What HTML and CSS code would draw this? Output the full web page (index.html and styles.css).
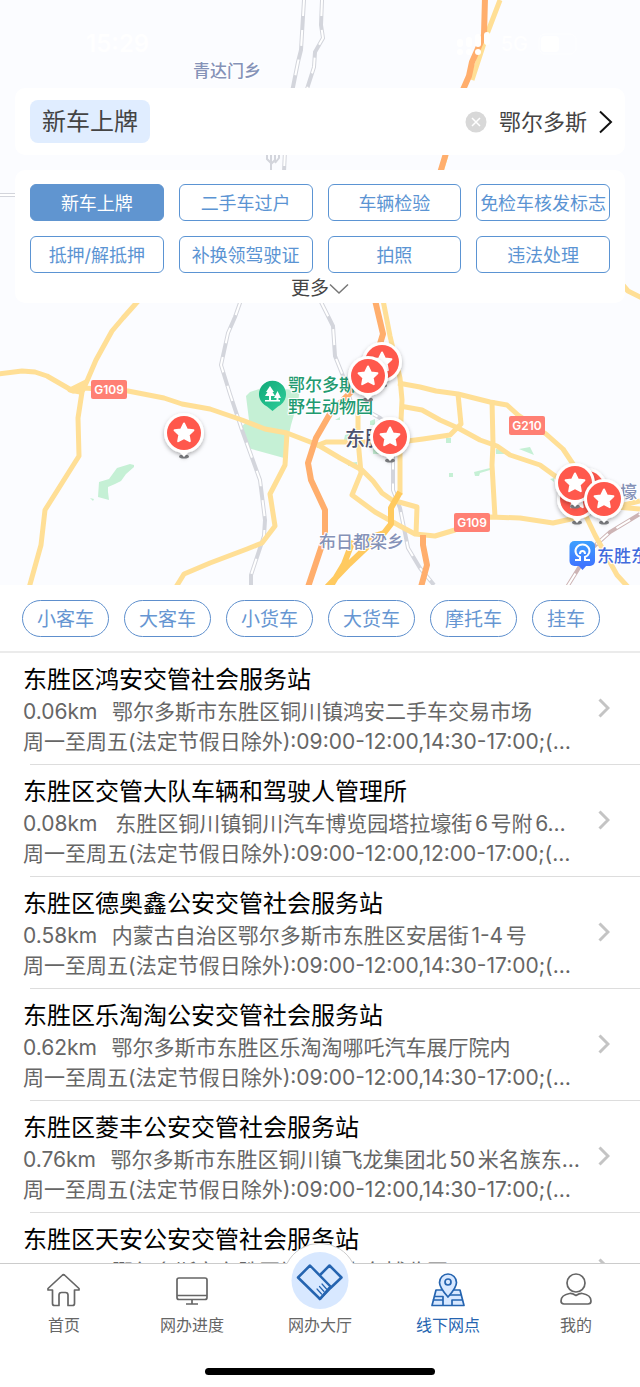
FILE: index.html
```html
<!DOCTYPE html>
<html lang="zh-CN">
<head>
<meta charset="utf-8">
<meta name="viewport" content="width=device-width, initial-scale=1">
<title>线下网点</title>
<link rel="stylesheet" href="styles.css">
</head>
<body>
<div class="app">
  <section class="map">
    <svg class="map-canvas" viewBox="0 0 640 585" preserveAspectRatio="xMidYMin slice" aria-label="地图">
      <defs>
        <filter id="soft" x="-50%" y="-50%" width="200%" height="200%">
          <feDropShadow dx="0" dy="2" stdDeviation="2" flood-color="#000" flood-opacity=".3"/>
        </filter>
        <linearGradient id="metro" x1="0" y1="0" x2="0" y2="1">
          <stop offset="0" stop-color="#3ea0ff"/><stop offset="1" stop-color="#3f74ff"/>
        </linearGradient>
        <linearGradient id="leaf" x1="0" y1="0" x2="1" y2="1">
          <stop offset="0" stop-color="#10a878"/><stop offset="1" stop-color="#31cf9b"/>
        </linearGradient>
        <g id="pin">
          <ellipse cx="0" cy="23.500" rx="5" ry="2" fill="#85878b"/>
          <path filter="url(#soft)" fill="#fff" d="M0 24L-4 19.6A20 20 0 1 1 4 19.6Z"/>
          <circle r="17" fill="#ff584c"/>
          <path fill="#fff" stroke="#fff" stroke-width="2" stroke-linejoin="round" d="M0-9.5L2.9-3.6L9.4-2.8L4.7 1.8L5.8 8.2L0 5.2L-5.8 8.2L-4.7 1.8L-9.4-2.8L-2.9-3.6Z"/>
        </g>
      </defs>

      <g class="green">
        <path d="M246 396L250 392L262 388L300 390L298 401L291 425L284 458L248 448L242 426L249 420Z"/>
        <path d="M130 464L134 465L134 467L126 474L121 481L115 484L108 487V492L109 500L98 497L99 482L109 479L117 468Z"/>
        <path d="M90 498L94 499L93 501Z"/>
        <path d="M519 449L530 447L534 455L524 451ZM496 449L505 450L507 454H496ZM446 438H451V443H446ZM449 473H453V477H449ZM474 472L490 468V470L480 473L479 476H475ZM348 463L357 462V466H348ZM370 421L375 419V425H370ZM373 447H382V454H373ZM335 420L340 417V420ZM345 435L349 434V441L344 440ZM550 479L554 478V482Z"/>
      </g>

      <g class="rail">
        <path d="M304 0L301 50L298 62L292 92M322 0L321 25L323 38L315 52L314 67L306 92M285 150L284 172M0 195H20"/>
        <path d="M241 300L235 317L228 333L221 365L230 394L242 430L260 480L265 520L264 536L251 575V586M321 302L333 326L335 356L345 381L351 402L380 418L393 430V490L400 508L408 548L420 568L434 585"/>
      </g>
      <g class="rail-dash">
        <path d="M304 0L301 50L298 62L292 92M322 0L321 25L323 38L315 52L314 67L306 92M285 150L284 172M0 195H20"/>
        <path d="M241 300L235 317L228 333L221 365L230 394L242 430L260 480L265 520L264 536L251 575V586M321 302L333 326L335 356L345 381L351 402L380 418L393 430V490L400 508L408 548L420 568L434 585"/>
      </g>
      <path fill="none" stroke="#d3d5dc" stroke-width="2" d="M267 152V159L271 163V172M271 152V163M275 152V160L271 164M279 152V158L275 163"/>
      <path class="rail-pink" d="M567 587L590 550L610 532L640 514"/>
      <path class="rail-pink-dash" d="M567 587L590 550L610 532L640 514"/>

      <g class="road">
        <path d="M139 300L123 318L112 331L96 360L87 381L82 392L78 418L79 456L45 510L41 545L29 588"/>
        <path d="M-2 374L22 371L35 372L47 376L73 391L84 388L128 391L164 398L182 404L210 409L242 420L265 429L287 433L318 445L340 458L362 470L373 481L382 493L392 500L417 507L416 535"/>
        <path d="M70 390L86 382L80 392Z"/>
        <path d="M176 587L184 574L210 563L247 549L262 543L275 526L270 494L285 465L287 433"/>
        <path d="M383 300L390 336L400 378L402 400L400 441V495"/>
        <path d="M358 412V440L361 473L352 495L375 512L400 526L415 534L435 536L455 530L490 517L520 518L553 523L580 517"/>
        <path d="M398 383L420 387L436 391L458 394L490 402L507 405L518 415L546 434L563 449L577 470"/>
        <path d="M400 406L422 410L440 420L458 428L480 440L497 446L510 455L540 465L562 481"/>
        <path d="M316 446L326 442H400L423 439L450 435L461 424L458 394M492 400L493 444L492 465L495 517"/>
        <path d="M583 510L595 535L617 575L628 587M616 507L640 501M616 507L640 509M622 284L628 291L642 298M500 0L487 34L472 80M446 155L441 172"/>
      </g>
      <path class="road-main" d="M400 492L391 508V524L384 533L368 546L349 564L327 587M384 533L352 543L344 564L332 584"/>
      <path class="highway" d="M485-2L484 35L472 62L469 76L462 92M447 150L440 173M375 300L383 334L372 370L348 395L331 412L316 438L308 463L311 480L325 510V536L308 587M423 535V545L427 565L421 587"/>

      <g class="shield">
        <rect x="91" y="380" width="36" height="19" rx="2"/><text x="109" y="394">G109</text>
        <rect x="509" y="416" width="36" height="19" rx="2"/><text x="527" y="430">G210</text>
        <rect x="454" y="513" width="36" height="19" rx="2"/><text x="472" y="527">G109</text>
      </g>

      <path fill="url(#leaf)" d="M272.500 411L267 406.500A13.500 13.500 0 1 1 278 406.500Z"/>
      <path fill="#fff" d="M270 386L274 392H272.500L275 396H271V400H269V396H265L267.500 392H266ZM277.500 391L281 398H278.500V400H276.500V398H274ZM265 400H280V401.500H265Z"/>

      <rect x="569.500" y="541" width="25.500" height="25" rx="5" fill="url(#metro)"/>
      <path d="M578 565L582.500 570L587 565Z" fill="#3f74ff"/>
      <path fill="none" stroke="#fff" stroke-width="2" d="M575 560H580V557A7 6.500 0 1 1 585 557V560H590M580 554Q580 551 582.500 551T585 554"/>

      <g class="place">
        <text x="193" y="77">青达门乡</text>
        <text x="319" y="548">布日都梁乡</text>
        <text x="620" y="498">壕</text>
      </g>
      <g class="place park">
        <text x="288" y="391">鄂尔多斯市</text>
        <text x="288" y="413">野生动物园</text>
      </g>
      <text class="place city-name" x="345" y="446">东胜区</text>
      <text class="place station" x="597" y="562">东胜东</text>

      <use href="#pin" x="184" y="433"/>
      <use href="#pin" x="382" y="362"/>
      <use href="#pin" x="368" y="376"/>
      <use href="#pin" x="390" y="437"/>
      <use href="#pin" x="587" y="488"/>
      <use href="#pin" x="577" y="499"/>
      <use href="#pin" x="575" y="483"/>
      <use href="#pin" x="604" y="499"/>
    </svg>

    <div class="overlay">
      <header class="status">
        <span>15:29</span>
        <span class="status-right">
          <svg width="34" height="24" viewBox="0 0 34 24" fill="#fff"><rect y="7" width="6" height="8" rx="3"/><rect x="9" y="5" width="6" height="10" rx="3"/><rect x="18" y="2" width="6" height="13" rx="3"/><rect x="27" width="6" height="13" rx="3"/><circle cx="3" cy="20" r="3"/><circle cx="12" cy="20" r="3"/><circle cx="21" cy="20" r="3"/></svg>
          <span class="network">5G</span>
          <svg width="42" height="22" viewBox="0 0 42 22"><rect x="1" y="1" width="37" height="20" rx="6" fill="none" stroke="#fff" stroke-opacity=".6"/><rect x="3" y="3" width="18" height="16" rx="4" fill="#fff"/></svg>
        </span>
      </header>

      <div class="search card">
        <span class="tag">新车上牌</span>
        <button class="clear" type="button" aria-label="清除">
          <svg width="22" height="22" viewBox="0 0 22 22"><circle cx="11" cy="11" r="10.500" fill="#d8d8d8"/><path d="M7 7L15 15M15 7L7 15" stroke="#fff" stroke-width="1.500"/></svg>
        </button>
        <button class="city" type="button"><span class="city-label">鄂尔多斯</span>
          <svg width="14" height="24" viewBox="0 0 14 24"><path d="M1 1.500L12 12L1 22.500" fill="none" stroke="#111" stroke-width="2"/></svg>
        </button>
      </div>

      <div class="services card">
        <div class="service-grid">
          <button type="button" class="service active">新车上牌</button>
          <button type="button" class="service">二手车过户</button>
          <button type="button" class="service">车辆检验</button>
          <button type="button" class="service">免检车核发标志</button>
          <button type="button" class="service">抵押/解抵押</button>
          <button type="button" class="service">补换领驾驶证</button>
          <button type="button" class="service">拍照</button>
          <button type="button" class="service">违法处理</button>
        </div>
        <button type="button" class="more">更多<svg width="20" height="12" viewBox="0 0 20 12"><path d="M1 1.500L10 10L19 1.500" fill="none" stroke="#777" stroke-width="1.500"/></svg></button>
      </div>
    </div>
  </section>

  <div class="chips">
    <button type="button" class="chip">小客车</button>
    <button type="button" class="chip">大客车</button>
    <button type="button" class="chip">小货车</button>
    <button type="button" class="chip">大货车</button>
    <button type="button" class="chip">摩托车</button>
    <button type="button" class="chip">挂车</button>
  </div>

  <main class="list">
    <a class="row" href="#s1">
      <h2 class="name">东胜区鸿安交管社会服务站</h2>
      <p class="line"><span class="distance">0.06km</span>鄂尔多斯市东胜区铜川镇鸿安二手车交易市场</p>
      <p class="line">周一至周五(法定节假日除外):09:00-12:00,14:30-17:00;(…</p>
      <svg class="arrow" viewBox="0 0 12 20"><path d="M1.500 1.500L10 10L1.500 18.500"/></svg>
    </a>
    <a class="row" href="#s2">
      <h2 class="name">东胜区交管大队车辆和驾驶人管理所</h2>
      <p class="line"><span class="distance">0.08km</span>&nbsp;东胜区铜川镇铜川汽车博览园塔拉壕街6号附6…</p>
      <p class="line">周一至周五(法定节假日除外):09:00-12:00,12:00-17:00;(…</p>
      <svg class="arrow" viewBox="0 0 12 20"><path d="M1.500 1.500L10 10L1.500 18.500"/></svg>
    </a>
    <a class="row" href="#s3">
      <h2 class="name">东胜区德奥鑫公安交管社会服务站</h2>
      <p class="line"><span class="distance">0.58km</span>内蒙古自治区鄂尔多斯市东胜区安居街1-4号</p>
      <p class="line">周一至周五(法定节假日除外):09:00-12:00,14:30-17:00;(…</p>
      <svg class="arrow" viewBox="0 0 12 20"><path d="M1.500 1.500L10 10L1.500 18.500"/></svg>
    </a>
    <a class="row" href="#s4">
      <h2 class="name">东胜区乐淘淘公安交管社会服务站</h2>
      <p class="line"><span class="distance">0.62km</span>鄂尔多斯市东胜区乐淘淘哪吒汽车展厅院内</p>
      <p class="line">周一至周五(法定节假日除外):09:00-12:00,14:30-17:00;(…</p>
      <svg class="arrow" viewBox="0 0 12 20"><path d="M1.500 1.500L10 10L1.500 18.500"/></svg>
    </a>
    <a class="row" href="#s5">
      <h2 class="name">东胜区菱丰公安交管社会服务站</h2>
      <p class="line"><span class="distance">0.76km</span>鄂尔多斯市东胜区铜川镇飞龙集团北50米名族东…</p>
      <p class="line">周一至周五(法定节假日除外):09:00-12:00,14:30-17:00;(…</p>
      <svg class="arrow" viewBox="0 0 12 20"><path d="M1.500 1.500L10 10L1.500 18.500"/></svg>
    </a>
    <a class="row" href="#s6">
      <h2 class="name">东胜区天安公安交管社会服务站</h2>
      <p class="line"><span class="distance">0.80km</span>鄂尔多斯市东胜区铜川镇汽车博览园</p>
      <svg class="arrow" viewBox="0 0 12 20"><path d="M1.500 1.500L10 10L1.500 18.500"/></svg>
    </a>
  </main>

  <nav class="tabbar">
    <div class="tabs">
      <a class="tab" href="#home">
        <svg class="icon" viewBox="0 0 34 34"><path d="M15 2.500Q16.500 1 18 2.500L32 15.500V17H27.500V30.500Q27.500 32.500 25.500 32.500H21V22Q21 19.500 18.500 19.500H14.500Q12 19.500 12 22V32.500H7.500Q5.500 32.500 5.500 30.500V17H1V15.500Z"/></svg>
        首页
      </a>
      <a class="tab" href="#progress">
        <svg class="icon" viewBox="0 0 34 34"><rect x="2" y="5" width="30" height="21.500" rx="2"/><path d="M2 22.500H32M17 26.500V31M11 31H23"/></svg>
        网办进度
      </a>
      <a class="tab" href="#hall">
        <svg class="hall" viewBox="0 0 76 76">
          <path d="M5 20.500A37 37 0 0 1 71 20.500V70H5Z" fill="#fff"/>
          <path d="M5 20.500A37 37 0 0 1 71 20.500" fill="none" stroke="#ccc"/>
          <circle cx="38" cy="37.500" r="28.500" fill="#d8e8ff"/>
          <g fill="none" stroke="#2564b0" stroke-width="2.500" stroke-linejoin="round" stroke-linecap="round">
            <path d="M28 22.500L16 34.500L38 56L48.500 43.500Z"/>
            <path d="M38.500 31.500L47.500 22.500L59.500 34.500L48.500 45L38 56"/>
            <path stroke-width="1.200" d="M35 46L39.500 51M37.500 43.500L42 48.500M40 41L44.500 46"/>
          </g>
        </svg>
        网办大厅
      </a>
      <a class="tab current" href="#offices">
        <svg class="icon" viewBox="0 0 34 34"><path fill="#d8e8ff" d="M5 17H29L33 32.500H1ZM4 23.500H12V32M12 27H1.500M21 32V27H32M19 22H30"/><path fill="#d8e8ff" d="M17 24Q8.500 14.500 8.500 9.500A8.500 8.500 0 0 1 25.500 9.500Q25.500 14.500 17 24Z"/><circle cx="17" cy="9" r="3"/></svg>
        线下网点
      </a>
      <a class="tab" href="#me">
        <svg class="icon" viewBox="0 0 34 34"><circle cx="17" cy="10" r="9"/><path d="M10.500 20.500Q13 20 17 22.500Q21 20 23.500 20.500Q32 22 32 28Q32 31 29 31H5Q2 31 2 28Q2 22 10.500 20.500Z"/></svg>
        我的
      </a>
    </div>
    <div class="home-bar"></div>
  </nav>
</div>
</body>
</html>
```

FILE: styles.css
```css
* {
  box-sizing: border-box;
}

body {
  margin: 0;
  background: #fff;
  color: #444;
  font-family: Inter, "Noto Sans CJK SC", sans-serif;
  text-autospace: normal;
}

button {
  margin: 0;
  padding: 0;
  border: 0;
  background: none;
  color: inherit;
  font: inherit;
  white-space: nowrap;
  cursor: pointer;
}

a {
  color: inherit;
  text-decoration: none;
}

.app {
  display: flex;
  flex-direction: column;
  height: 100vh;
}

/* Map */
.map {
  position: relative;
  flex: none;
  aspect-ratio: 640 / 585;
  overflow: hidden;
  background: #fbfcff;
}

.map-canvas {
  position: absolute;
  inset: 0;
  width: 100%;
  height: 100%;
}

.green { fill: #c5f0d5; }
.rail, .rail-dash, .rail-pink, .rail-pink-dash, .road, .road-main, .highway { fill: none; }
.rail { stroke: #d3d5dc; stroke-width: 4; }
.rail-dash { stroke: #fff; stroke-width: 2; stroke-dasharray: 16 14; }
.rail-pink { stroke: #cdb4b5; stroke-width: 4; }
.rail-pink-dash { stroke: #fff; stroke-width: 2; stroke-dasharray: 16 10; }
.road { stroke: #ffdf96; stroke-width: 5; stroke-linejoin: round; }
.road-main { stroke: #ffca60; stroke-width: 6; stroke-linejoin: round; }
.highway { stroke: #ffae6d; stroke-width: 6; stroke-linejoin: round; }

.shield rect { fill: #ff8074; }
.shield text {
  fill: #fff;
  font-size: 12px;
  font-weight: 600;
  text-anchor: middle;
}

.place {
  fill: #8592b8;
  stroke: #fff;
  stroke-width: 2px;
  paint-order: stroke;
  font-family: "Noto Sans CJK SC", sans-serif;
  font-size: 17px;
  font-weight: 500;
}
.park { fill: #229a70; }
.city-name { fill: #4c5370; font-size: 20px; }
.station { fill: #416bdd; }

.overlay {
  position: relative;
  display: flex;
  flex-direction: column;
  gap: 15px;
  padding: 0 15px;
}

.status {
  display: flex;
  align-items: center;
  justify-content: space-between;
  height: 73px;
  padding: 14px 45px 0 71px;
  color: #fff;
  font-size: 24px;
  font-weight: 600;
}
.status-right {
  display: flex;
  align-items: center;
  gap: 10px;
}
.network {
  font-size: 20px;
  font-weight: 500;
}

.card {
  background: #fff;
  border-radius: 10px;
}

.search {
  display: flex;
  align-items: center;
  padding: 12px 12px 12px 15px;
}
.tag {
  margin-right: auto;
  padding: 0 12px;
  border-radius: 8px;
  background: #e0edff;
  font-size: 24px;
  line-height: 43px;
}
.clear {
  display: flex;
  margin-right: 12px;
}
.city {
  display: flex;
  align-items: center;
  gap: 12px;
  font-size: 22px;
}
.city-label {
  padding-bottom: 4px;
}

.services {
  padding: 14px 15px 0;
}
.service-grid {
  display: grid;
  grid-template-columns: repeat(4, 1fr);
  gap: 15px;
}
.service {
  padding-top: 2px;
  border: 1px solid #5b94d3;
  border-radius: 6px;
  color: #5b94d3;
  font-size: 18px;
  line-height: 33px;
}
.service.active {
  background: #6095d0;
  border-color: #6095d0;
  color: #fff;
}
.more {
  display: flex;
  align-items: center;
  margin: 0 auto;
  padding-top: 2px;
  font-size: 19px;
  line-height: 28px;
}

/* Vehicle filters */
.chips {
  display: flex;
  flex: none;
  gap: 15px;
  padding: 15px 22px 14px;
  border-bottom: 2px solid #ebebeb;
  overflow: hidden;
}
.chip {
  padding: 2px 14px 0;
  border: 1px solid #5e8fcd;
  border-radius: 19px;
  color: #6696d2;
  font-size: 19px;
  line-height: 33px;
}

/* Office list */
.list {
  flex: 1;
  min-height: 0;
  overflow-y: auto;
  scrollbar-width: none;
}
.row {
  position: relative;
  display: block;
  padding: 10px 54px 8px 23px;
}
.row::after {
  content: "";
  display: block;
  position: absolute;
  inset: auto 0 0 30px;
  border-bottom: 1px solid #ddd;
}
.name {
  margin: 0 0 1px;
  color: #000;
  font-size: 24px;
  font-weight: 400;
  line-height: 33px;
}
.line {
  margin: 0;
  color: #666;
  font-size: 21px;
  line-height: 30px;
  white-space: nowrap;
}
.distance {
  margin-right: 12px;
}
.arrow {
  position: absolute;
  top: 45px;
  right: 30px;
  width: 12px;
  height: 20px;
  fill: none;
  stroke: #c4c4c4;
  stroke-width: 3;
}

/* Bottom tabs */
.tabbar {
  position: relative;
  flex: none;
  padding-bottom: 12px;
  border-top: 1px solid #ccc;
  background: #fff;
}
.tabs {
  display: grid;
  grid-template-columns: repeat(5, 1fr);
}
.tab {
  position: relative;
  display: flex;
  flex-direction: column;
  align-items: center;
  justify-content: flex-end;
  gap: 6px;
  padding-top: 9px;
  color: #666;
  font-size: 16px;
  line-height: 24px;
}
.icon {
  width: 34px;
  height: 34px;
  fill: none;
  stroke: currentColor;
  stroke-width: 1.7px;
  stroke-linejoin: round;
}
.current {
  color: #2564b0;
}
.hall {
  position: absolute;
  top: -21px;
  width: 76px;
  height: 76px;
}
.home-bar {
  width: 36%;
  height: 7px;
  margin: 31px auto 0;
  border-radius: 4px;
  background: #000;
}
```
